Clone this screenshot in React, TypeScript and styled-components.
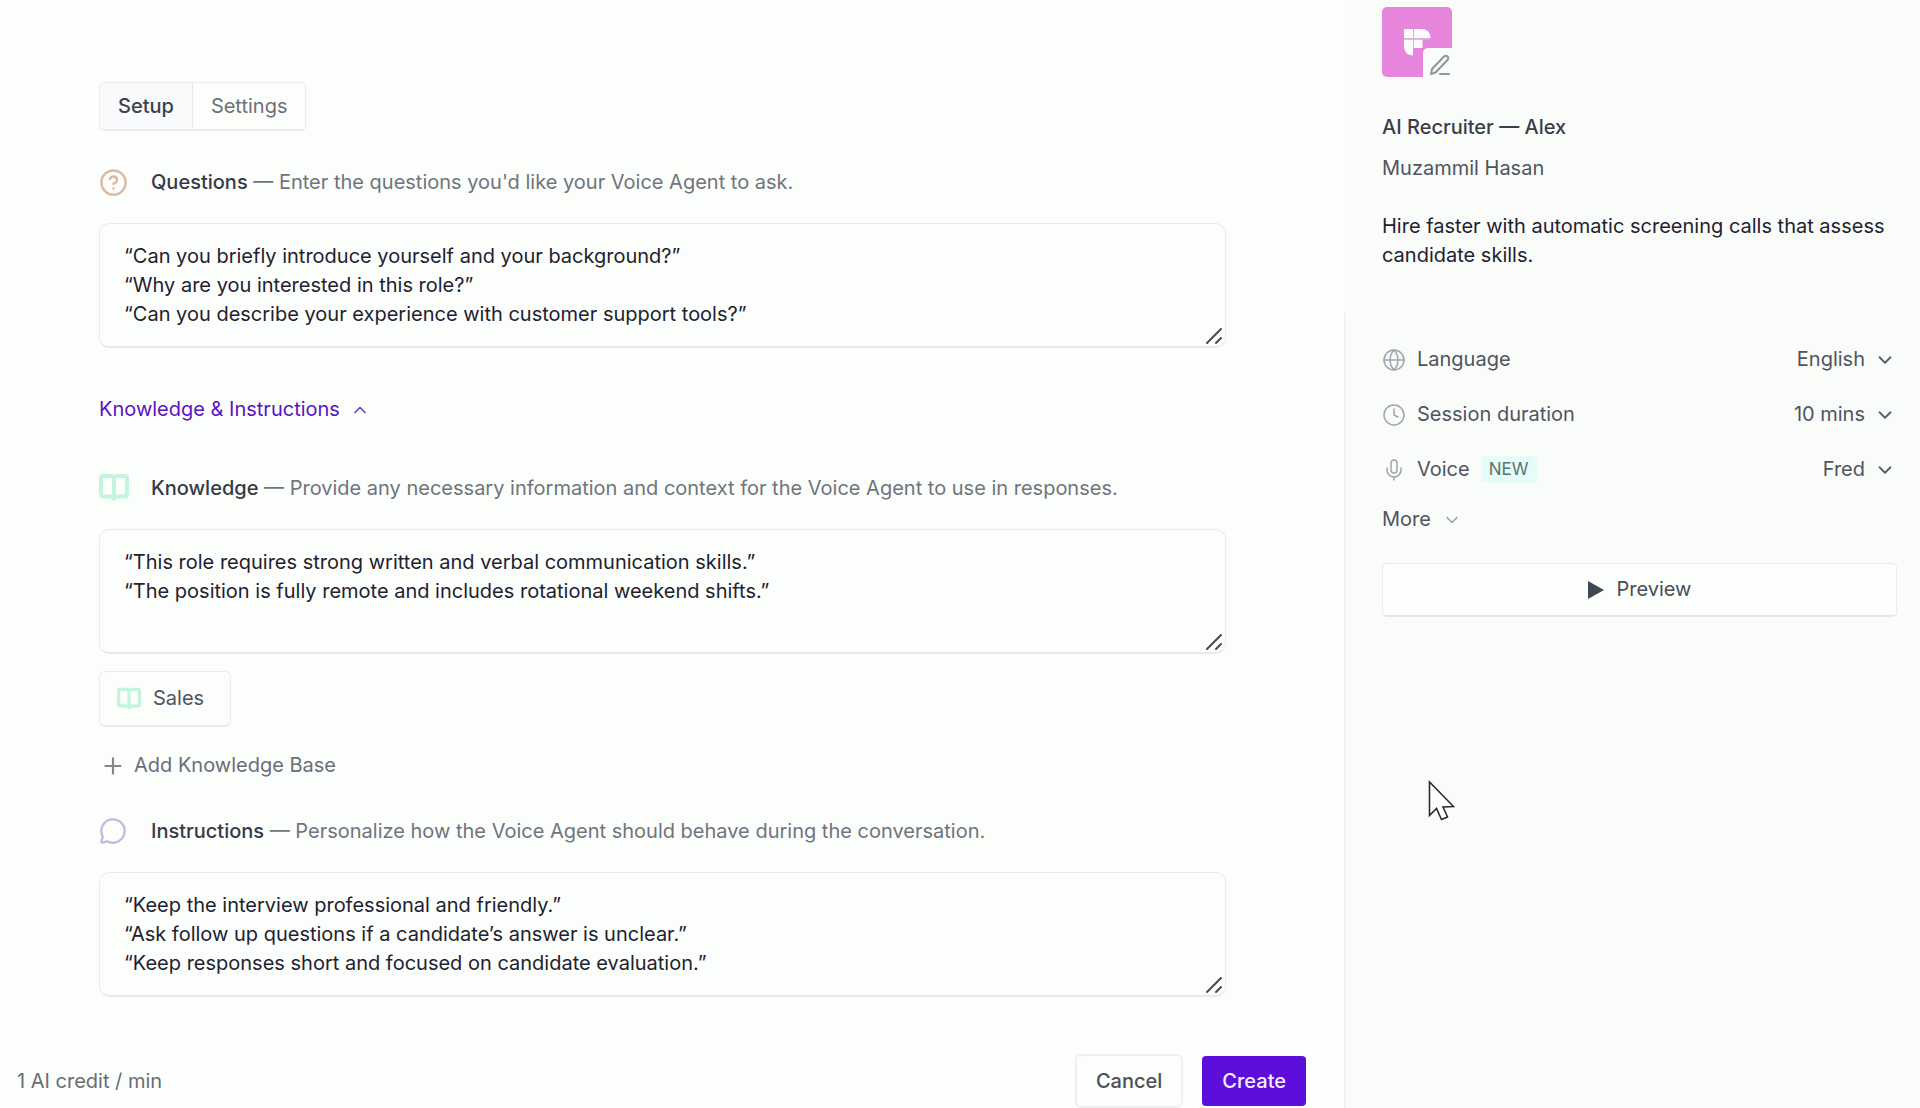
import React from "react";
import styled, { createGlobalStyle } from "styled-components";
import { ChevronDown, ChevronUp, CircleHelp, Clock, Globe, MessageCircle, Mic, Plus } from "lucide-react";

const GlobalStyle = createGlobalStyle`
  *, *::before, *::after { box-sizing: border-box; }
  body { margin: 0; background: #fcfefb; }
  body, button, select, textarea {
    font-family: Inter, "Liberation Sans", sans-serif;
    font-size: 20px;
    line-height: 29px;
    color: #1e2230;
  }
  button, select { cursor: pointer; }
  h1, h2, p { margin: 0; font-size: inherit; }
`;

const Page = styled.div`
  display: grid;
  grid-template-columns: 7fr 3fr;
  min-height: 100vh;
`;

const Main = styled.main`
  display: flex;
  flex-direction: column;
  min-width: 0;
`;

const Form = styled.form`
  display: flex;
  flex-direction: column;
  align-items: flex-start;
  padding: 82px 118px 0 99px;
`;

const Tabs = styled.div`
  display: flex;
  height: 49px;
  border: 1px solid #ebebee;
  border-bottom-width: 2px;
  border-radius: 5px;
  overflow: hidden;
`;

const Tab = styled.button<{ $active?: boolean }>`
  padding: 0 18px;
  border: 0;
  border-right: ${(p) => (p.$active ? "1px solid #e8e8ee" : "0")};
  background: ${(p) => (p.$active ? "#f9fafb" : "transparent")};
  color: ${(p) => (p.$active ? "#3b4050" : "#6d7079")};
  font-weight: ${(p) => (p.$active ? 500 : 400)};
`;

const Field = styled.section<{ $top: number }>`
  width: 100%;
  margin-top: ${(p) => p.$top}px;
`;

const FieldLabel = styled.label`
  display: flex;
  align-items: center;
  height: 32px;
  margin-bottom: 25px;
  color: #70747d;
  white-space: pre-wrap;

  strong { color: #363a47; font-weight: 500; }
`;

const IconSlot = styled.span`
  display: flex;
  flex: none;
  width: 52px;
`;

const TextBox = styled.div`
  position: relative;
`;

const TextArea = styled.textarea`
  display: block;
  width: 100%;
  height: 125px;
  padding: 18px 24px;
  border: 1px solid #ebebee;
  border-bottom: 2px solid #e9e9eb;
  border-radius: 10px;
  background: transparent;
  outline: 0;
  resize: none;
`;

const Grip = styled.svg`
  position: absolute;
  right: 3px;
  bottom: 3px;
  pointer-events: none;
`;

const SectionToggle = styled.button`
  display: flex;
  align-items: center;
  gap: 10px;
  margin-top: 47px;
  padding: 0;
  border: 0;
  background: none;
  color: #5b12c4;
`;

const Chip = styled.button`
  display: flex;
  align-items: center;
  gap: 12px;
  height: 56px;
  margin-top: 17px;
  padding: 0 26px 0 17px;
  border: 1px solid #ebebf0;
  border-bottom: 2px solid #e9e9ec;
  border-radius: 6px;
  background: transparent;
  color: #50545f;
`;

const AddButton = styled.button`
  display: flex;
  align-items: center;
  gap: 8px;
  margin-top: 24px;
  padding: 0 0 0 1px;
  border: 0;
  background: none;
  color: #6a6e79;
`;

const Footer = styled.footer`
  display: flex;
  align-items: center;
  gap: 19px;
  margin-top: auto;
  padding: 0 38px 0 17px;
  color: #6a6d75;
`;

const Credit = styled.p`
  flex: 1;
`;

const ActionButton = styled.button<{ $primary?: boolean }>`
  height: ${(p) => (p.$primary ? 50 : 54)}px;
  padding: 0 ${(p) => (p.$primary ? 20 : 19)}px;
  border: ${(p) => (p.$primary ? "0" : "2px solid #efeff1")};
  border-radius: ${(p) => (p.$primary ? 4 : 6)}px;
  background: ${(p) => (p.$primary ? "#5e0edb" : "transparent")};
  color: ${(p) => (p.$primary ? "#f5effd" : "#4b4f5b")};
  font-weight: 500;
`;

const Sidebar = styled.aside`
  display: flex;
  flex-direction: column;
  min-width: 0;
`;

const Profile = styled.header`
  min-height: 313px;
  padding: 7px 23px 0 38px;
  background: linear-gradient(90deg, #fcfefb, #fafcfa 40px);
`;

const Avatar = styled.div`
  position: relative;
  width: 70px;
  height: 70px;
  border-radius: 5px;
  background: #e785dc;
`;

const AvatarLogo = styled.svg`
  position: absolute;
  left: 22px;
  top: 22px;
`;

const EditButton = styled.button`
  position: absolute;
  right: 0;
  bottom: 0;
  display: grid;
  place-items: center;
  width: 29px;
  height: 29px;
  padding: 4px 0 0 4px;
  border: 0;
  border-top-left-radius: 5px;
  background: #fafcfa;
`;

const AgentName = styled.h1`
  margin-top: 36px;
  color: #3a3e49;
  font-weight: 500;
`;

const Owner = styled.p`
  margin-top: 12px;
  color: #50545f;
`;

const Description = styled.p`
  margin-top: 29px;
`;

const Options = styled.div`
  flex: 1;
  padding: 19px 23px 0 36px;
  border-left: 2px solid #f1f1f3;
  background: #fafcfa;
`;

const OptionRow = styled.div`
  display: flex;
  align-items: center;
  height: 55px;
  color: #50545f;
`;

const OptionLabel = styled.label`
  display: flex;
  flex: 1;
  align-items: center;
  gap: 11px;

  svg { color: #a2a4ad; }
`;

const Badge = styled.span`
  padding: 0 8px;
  border-radius: 4px;
  background: #e6fcf8;
  color: #57756f;
  font-size: 17px;
  line-height: 27px;
`;

const SelectBox = styled.div`
  position: relative;

  svg { position: absolute; right: 1px; top: 4px; pointer-events: none; }
`;

const Select = styled.select`
  display: block;
  width: 130px;
  padding: 0 32px 0 0;
  border: 0;
  background: none;
  color: #50545f;
  appearance: none;
  text-align-last: right;
`;

const MoreButton = styled.button`
  display: flex;
  align-items: center;
  gap: 11px;
  margin-top: 8px;
  padding: 0;
  border: 0;
  background: none;
  color: #50545f;
`;

const PreviewButton = styled.button`
  display: flex;
  align-items: center;
  justify-content: center;
  gap: 13px;
  width: 100%;
  height: 54px;
  margin-top: 29px;
  border: 1px solid #ebebee;
  border-bottom: 2px solid #e6e6e9;
  border-radius: 5px;
  background: #fcfefb;
  color: #484d59;
`;

const Pointer = styled.svg`
  position: fixed;
  left: 1427px;
  top: 779px;
  pointer-events: none;
`;

const BookIcon = ({ size }: { size: number }) => (
  <svg width={size} height={size} viewBox="0 0 30 30" fill="none" stroke="#c4f4e0" strokeWidth="4" strokeLinejoin="round" aria-hidden="true">
    <path d="M15 6.5C15 4 13.5 3 11.5 3H4Q2 3 2 5V21.500Q2 23.500 4 23.500H11.500Q14 23.500 15 26Q16 23.500 18.500 23.500H26Q28 23.500 28 21.500V5Q28 3 26 3H18.500Q15 3 15 6.500V25" />
  </svg>
);

interface PromptFieldProps {
  id: string;
  title: string;
  hint: string;
  value: string;
  icon: React.ReactNode;
  top: number;
}

const PromptField = ({ id, title, hint, value, icon, top }: PromptFieldProps) => (
  <Field $top={top}>
    <FieldLabel htmlFor={id}>
      <IconSlot>{icon}</IconSlot>
      <span><strong>{title}</strong> — {hint}</span>
    </FieldLabel>
    <TextBox>
      <TextArea id={id} defaultValue={value} spellCheck={false} />
      <Grip width="18" height="18" viewBox="0 0 18 18" stroke="#4a4a4c" strokeWidth="2" strokeLinecap="round" aria-hidden="true">
        <path d="M2 16L16 2M11 16L16 11" />
      </Grip>
    </TextBox>
  </Field>
);

interface OptionProps {
  id: string;
  label: string;
  icon: React.ReactNode;
  choices: string[];
  badge?: string;
}

const Option = ({ id, label, icon, choices, badge }: OptionProps) => (
  <OptionRow>
    <OptionLabel htmlFor={id}>
      {icon}
      {label}
      {badge && <Badge>{badge}</Badge>}
    </OptionLabel>
    <SelectBox>
      <Select id={id}>
        {choices.map((choice) => <option key={choice}>{choice}</option>)}
      </Select>
      <ChevronDown size={22} strokeWidth={2} color="#5a5e69" />
    </SelectBox>
  </OptionRow>
);

export default function App() {
  return (
    <Page>
      <GlobalStyle />
      <Main>
        <Form onSubmit={(e) => e.preventDefault()}>
          <Tabs role="tablist">
            <Tab type="button" role="tab" aria-selected="true" $active>Setup</Tab>
            <Tab type="button" role="tab" aria-selected="false">Settings</Tab>
          </Tabs>
          <PromptField
            id="questions"
            top={35}
            icon={<CircleHelp size={29} strokeWidth={2} color="#dcb9a0" />}
            title="Questions"
            hint="Enter the questions you'd like your Voice Agent to ask."
            value={"“Can you briefly introduce yourself and your background?”\n“Why are you interested in this role?”\n“Can you describe your experience with customer support tools?”"}
          />
          <SectionToggle type="button" aria-expanded="true">
            Knowledge &amp; Instructions
            <ChevronUp size={20} strokeWidth={2} color="#6f3fc0" />
          </SectionToggle>
          <PromptField
            id="knowledge"
            top={48}
            icon={<BookIcon size={30} />}
            title="Knowledge"
            hint="Provide any necessary information and context for the Voice Agent to use in responses."
            value={"“This role requires strong written and verbal communication skills.”\n“The position is fully remote and includes rotational weekend shifts.”"}
          />
          <Chip type="button">
            <BookIcon size={24} />
            Sales
          </Chip>
          <AddButton type="button">
            <Plus size={26} strokeWidth={2} color="#85868f" />
            Add Knowledge Base
          </AddButton>
          <PromptField
            id="instructions"
            top={35}
            icon={<MessageCircle size={28} strokeWidth={2} color="#c9b8e0" />}
            title="Instructions"
            hint="Personalize how the Voice Agent should behave during the conversation."
            value={"“Keep the interview professional and friendly.”\n“Ask follow up questions if a candidate’s answer is unclear.”\n“Keep responses short and focused on candidate evaluation.”"}
          />
        </Form>
        <Footer>
          <Credit>1 AI credit / min</Credit>
          <ActionButton type="button">Cancel</ActionButton>
          <ActionButton type="button" $primary>Create</ActionButton>
        </Footer>
      </Main>
      <Sidebar>
        <Profile>
          <Avatar>
            <AvatarLogo width="27" height="27" viewBox="0 0 27 27" fill="#fdfbfd" aria-hidden="true">
              <path d="M0 0H9V9H0zM10 0H17Q26.500 0 26.500 9H10zM0 10.500H9V26.500Q0 26 0 17zM10 10.500H18.500V19H10z" />
              <path d="M9 0h1v19H9zM0 9h26v1.500H0z" fill="#d5b3d4" />
            </AvatarLogo>
            <EditButton type="button" aria-label="Edit avatar">
              <svg width="22" height="22" viewBox="0 0 22 22" fill="none" stroke="#92959e" strokeWidth="2" strokeLinejoin="round" strokeLinecap="round" aria-hidden="true">
                <path d="M2 20L3 15L15 2.500Q17 1 18.500 2.500Q20 4 18.500 6L6.500 18.500ZM11 20H20" />
              </svg>
            </EditButton>
          </Avatar>
          <AgentName>AI Recruiter — Alex</AgentName>
          <Owner>Muzammil Hasan</Owner>
          <Description>Hire faster with automatic screening calls that assess candidate skills.</Description>
        </Profile>
        <Options>
          <Option id="language" label="Language" icon={<Globe size={24} strokeWidth={1.5} />} choices={["English"]} />
          <Option id="duration" label="Session duration" icon={<Clock size={24} strokeWidth={1.5} />} choices={["10 mins"]} />
          <Option id="voice" label="Voice" icon={<Mic size={24} strokeWidth={1.5} />} choices={["Fred"]} badge="NEW" />
          <MoreButton type="button" aria-expanded="false">
            More
            <ChevronDown size={20} strokeWidth={2} color="#a2a4ad" />
          </MoreButton>
          <PreviewButton type="button">
            <svg width="16" height="18" viewBox="0 0 16 18" fill="#3f4654" aria-hidden="true">
              <path d="M0 0L16 9L0 18z" />
            </svg>
            Preview
          </PreviewButton>
        </Options>
      </Sidebar>
      <Pointer width="28" height="42" viewBox="0 0 28 42" fill="#ffffff" stroke="#2b2b2e" strokeWidth="1.6" aria-hidden="true">
        <path d="M2.500 3V36.500L9.500 29.500L14.500 40.500L20.500 38L16 28L26.500 27.500z" />
      </Pointer>
    </Page>
  );
}
